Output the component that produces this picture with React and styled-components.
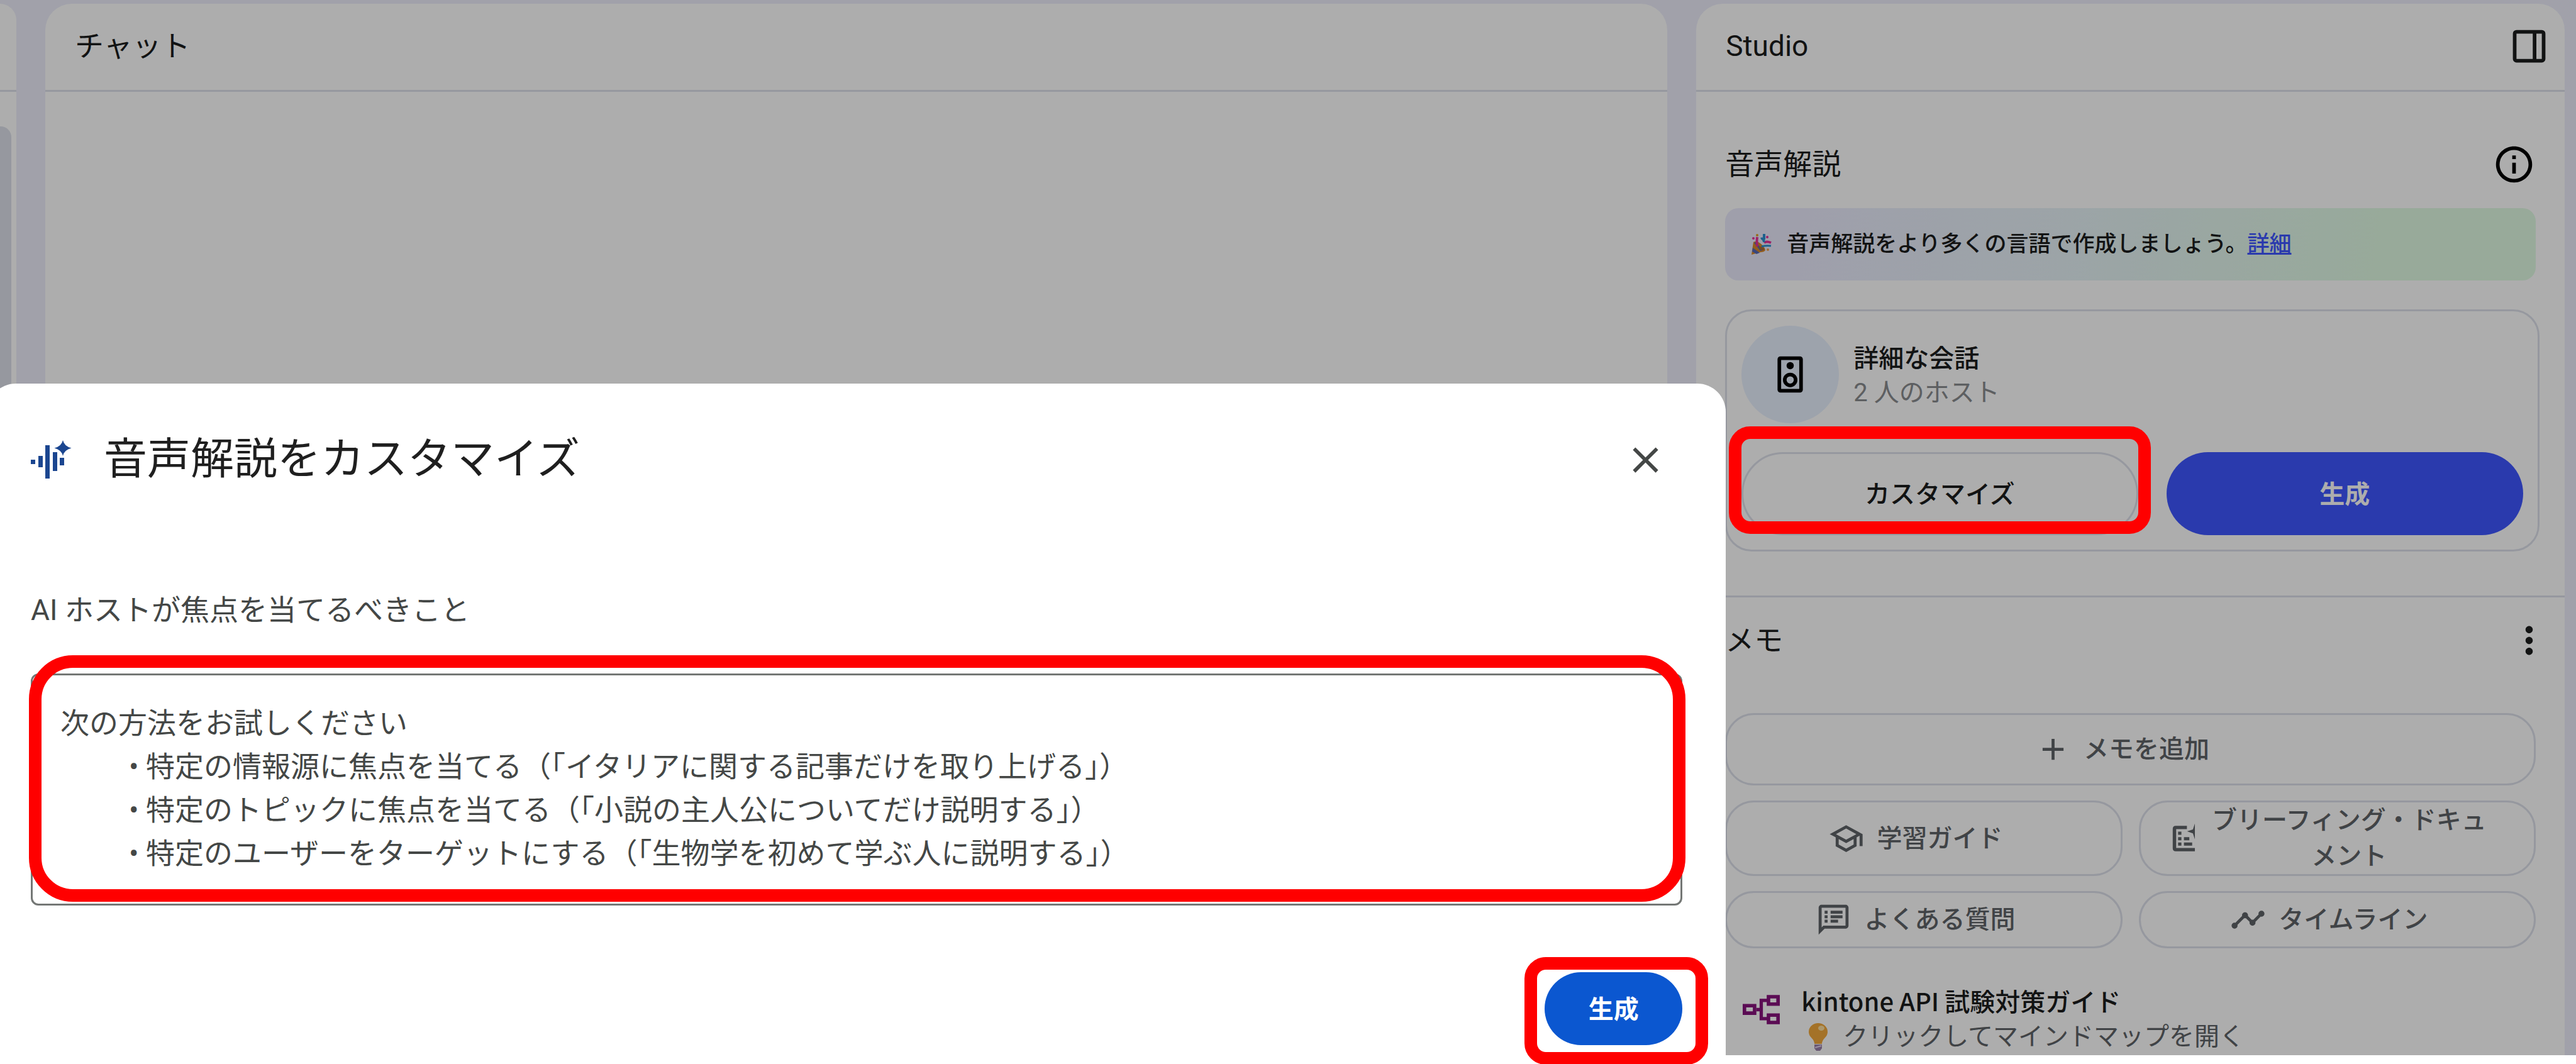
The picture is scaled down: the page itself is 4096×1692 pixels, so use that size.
import React from "react";
import styled, { createGlobalStyle } from "styled-components";
import {
  MdClose,
  MdInfoOutline,
  MdMoreVert,
  MdOutlineSchool,
  MdOutlineSpeakerNotes,
  MdTimeline,
  MdAdd,
} from "react-icons/md";

const color = {
  page: "#edeefb",
  line: "#dde1eb",
  text: "#1b1c1d",
  muted: "#8a8c90",
  soft: "#5f6368",
  brand: "#3f56ff",
  primary: "#0b57d0",
  mark: "#ff0000",
};

const GlobalStyle = createGlobalStyle`
  *, *::before, *::after { box-sizing: border-box; }
  body {
    margin: 0;
    background: #fff;
    color: ${color.text};
    font-family: Roboto, "Noto Sans CJK JP", sans-serif;
    font-size: 40px;
    line-height: 57px;
  }
  button, textarea { font: inherit; color: inherit; margin: 0; }
  button { cursor: pointer; }
  h1, h2, h3, p { margin: 0; font-weight: 400; }
  svg { display: block; flex: none; }
`;

const Frame = styled.div`
  position: relative;
  height: 100vh;
  overflow: hidden;
  background: #fff;
`;

const Page = styled.div`
  position: relative;
  height: calc(100% - 14px);
  padding: 6px 18px 0 0;
  background: ${color.page};
`;

const Columns = styled.div`
  display: grid;
  grid-template-columns: 26px minmax(0, 1868fr) minmax(0, 1000fr);
  gap: 46px;
  height: 100%;
`;

const Panel = styled.section`
  display: flex;
  flex-direction: column;
  min-height: 0;
  overflow: hidden;
  background: #fff;
  border-radius: ${(p) => (p.$edge ? "0 42px 0 0" : "42px 42px 0 0")};
`;

const PanelHeader = styled.header`
  display: flex;
  flex: none;
  align-items: center;
  justify-content: space-between;
  height: 140px;
  padding: 0 22px 2px 47px;
  border-bottom: 3px solid ${color.line};
`;

const Heading = styled.h2`
  font-size: 46px;
  line-height: 69px;
`;

const SourceBlock = styled.div`
  flex: 1;
  margin: 55px 8px 0 0;
  background: ${color.line};
  border-radius: 0 17px 0 0;
`;

const IconButton = styled.button`
  display: flex;
  padding: 0;
  border: 0;
  background: none;
  color: ${(p) => p.$color || color.text};
`;

const AudioSection = styled.div`
  display: flex;
  flex-direction: column;
  padding: 81px 46px 70px;
  border-bottom: 3px solid ${color.line};
`;

const TitleRow = styled.div`
  display: flex;
  align-items: center;
  justify-content: space-between;
`;

const Banner = styled.p`
  display: flex;
  align-items: center;
  gap: 23px;
  min-height: 115px;
  margin: 35px 0 46px;
  padding: 0 41px;
  border-radius: 21px;
  background: linear-gradient(100deg, #eaebfd 10%, #e6f2f7 42%, #e0fbe4 80%);
  font-size: 35px;
  font-weight: 500;
`;

const BannerLink = styled.a`
  color: ${color.brand};
`;

const Card = styled.div`
  box-sizing: content-box;
  align-self: flex-start;
  display: flex;
  flex-direction: column;
  gap: 46px;
  width: calc(100% - 46px);
  padding: 23px;
  border: 3px solid ${color.line};
  border-radius: 42px;
`;

const Host = styled.div`
  display: flex;
  align-items: center;
  gap: 23px;
`;

const HostIcon = styled.span`
  display: flex;
  align-items: center;
  justify-content: center;
  width: 155px;
  height: 155px;
  border-radius: 50%;
  background: #e8f0fe;
`;

const Strong = styled.h3`
  font-family: "Noto Sans CJK JP", sans-serif;
  font-size: 40px;
  font-weight: 500;
`;

const HostCount = styled.p`
  color: ${color.muted};
`;

const CardActions = styled.div`
  display: flex;
  gap: 45px;
`;

const Marked = styled.div`
  position: relative;
  display: flex;
  flex: ${(p) => p.$flex || "none"};
`;

const Mark = styled.span`
  position: absolute;
  z-index: 3;
  inset: ${(p) => p.$inset};
  border: 20px solid ${color.mark};
  border-radius: ${(p) => p.$radius}px;
  pointer-events: none;
`;

const Pill = styled.button`
  flex: ${(p) => p.$flex};
  height: 132px;
  padding: 3px 0 0;
  border: ${(p) => (p.$filled ? "0" : `3px solid ${color.line}`)};
  border-radius: 66px;
  background: ${(p) => (p.$filled ? color.brand : "#fff")};
  color: ${(p) => (p.$filled ? "#fff" : color.text)};
  font-weight: ${(p) => (p.$filled ? 700 : 500)};
`;

const NotesSection = styled.div`
  display: flex;
  flex-direction: column;
  padding: 34px 46px 0;
`;

const NotesTitle = styled(TitleRow)`
  margin: 0 -24px 81px 0;
`;

const NoteGrid = styled.div`
  display: grid;
  grid-template-columns: 1fr 1fr;
  gap: 24px 26px;
`;

const NoteButton = styled.button`
  display: flex;
  grid-column: ${(p) => (p.$wide ? "1 / -1" : "auto")};
  align-items: center;
  justify-content: center;
  gap: 20px;
  min-height: ${(p) => (p.$wide ? 115 : 91)}px;
  padding: 0 68px 0 42px;
  border: 3px solid ${color.line};
  border-radius: 46px;
  background: #fff;
  color: ${color.soft};
  font-weight: 500;
`;

const ClippedIcon = styled.span`
  flex: none;
  width: 44px;
  overflow: hidden;
`;

const NoteItem = styled.article`
  display: flex;
  gap: 29px;
  margin-top: 55px;
  padding-left: 23px;
  white-space: nowrap;
`;

const NoteIcon = styled.span`
  display: flex;
  align-items: center;
  justify-content: center;
  width: 69px;
  height: 69px;
  margin-top: 8px;
`;

const NoteHint = styled.p`
  display: flex;
  align-items: center;
  gap: 24px;
  padding-left: 12px;
  color: ${color.soft};
`;

const Scrim = styled.div`
  position: absolute;
  inset: 0;
  z-index: 1;
  background: rgba(0, 0, 0, 0.32);
`;

const Dialog = styled.form`
  position: absolute;
  z-index: 2;
  top: 610px;
  left: -20px;
  display: flex;
  flex-direction: column;
  width: calc(67vw + 20px);
  padding: 73px 69px 31px;
  border-radius: 45px 45px 0 0;
  background: #fff;
`;

const DialogHeader = styled.header`
  display: flex;
  align-items: center;
  gap: 50px;
  padding-right: 24px;
`;

const DialogTitle = styled.h1`
  flex: 1;
  color: #1f1f1f;
  font-size: 69px;
  line-height: 96px;
`;

const FocusLabel = styled.label`
  margin: 157px 0 66px;
  color: #444746;
  font-size: 46px;
  line-height: 69px;
`;

const FocusInput = styled.textarea`
  display: block;
  flex: 1;
  min-width: 0;
  padding: 42px 44px 45px;
  border: 3px solid #747775;
  border-radius: 12px;
  background: #fff;
  font-size: 46px;
  line-height: 69px;
  tab-size: 109px;
  resize: none;
  overflow: hidden;
  &::placeholder {
    color: #444746;
    opacity: 1;
  }
`;

const DialogFooter = styled.footer`
  display: flex;
  justify-content: flex-end;
  margin-top: 106px;
`;

const Submit = styled.button`
  width: 219px;
  height: 116px;
  padding: 3px 0 0;
  border: 0;
  border-radius: 58px;
  background: ${color.primary};
  color: #fff;
  font-weight: 700;
`;

const PanelIcon = () => (
  <svg width="69" height="69" viewBox="0 0 24 24" fill="currentColor" aria-hidden="true">
    <path d="M5 21q-.8 0-1.4-.6T3 19V5q0-.8.6-1.4T5 3h14q.8 0 1.4.6T21 5v14q0 .8-.6 1.4T19 21zm11-2h3V5h-3zm-2 0V5H5v14z" />
  </svg>
);

const SpeakerIcon = () => (
  <svg width="69" height="69" viewBox="0 0 24 24" fill="none" stroke="#000" strokeWidth="2" aria-hidden="true">
    <rect x="6" y="3" width="12" height="18" rx="0.6" />
    <circle cx="12" cy="7.1" r="2" fill="#000" stroke="none" />
    <circle cx="12" cy="15" r="3" />
  </svg>
);

const PartyIcon = () => (
  <svg width="34" height="34" viewBox="0 0 34 34" aria-hidden="true">
    <path d="M1 33 4 13q4-3 11 2t8 11q-2 3-7 3z" fill="#d98a2b" />
    <path d="m3 22 11 8-5 2-7-4zm2-8 10 13 4-1L8 13z" fill="#5468b8" />
    <path d="M12 20q5-1 10 4-3 4-7 1z" fill="#a86a3a" />
    <path d="M10 20q-1-8 0-15" fill="none" stroke="#e8309a" strokeWidth="4" />
    <path d="M21 14q4-3 11 0" fill="none" stroke="#e8309a" strokeWidth="4" />
    <path d="M16 8q4-2 5 5m0-13v9" fill="none" stroke="#2b8fd0" strokeWidth="4" />
    <path d="M17 20q7-2 15-1" fill="none" stroke="#2b8fd0" strokeWidth="3" />
    <circle cx="4" cy="7" r="2" fill="#e8309a" />
    <circle cx="26" cy="5" r="2" fill="#e8309a" />
    <circle cx="10" cy="2" r="2" fill="#e0a029" />
    <circle cx="27" cy="25" r="2" fill="#f0a04b" />
  </svg>
);

const BriefIcon = () => (
  <svg width="57" height="57" viewBox="0 0 24 24" fill="currentColor" aria-hidden="true">
    <path d="M5.700 3.500h7.500v2.200H6v12.600h13v2.200H5.700q-2 0-2-2v-13q0-2 2-2z" />
    <path d="M7.300 7.400h2.200v2.100H7.300zm0 3.700h2.200v2.100H7.300zm0 3.500h2.200v2.100H7.300zm3.900-3.500h3.600v2.100h-3.600zm0 3.500h5.500v2.100h-5.500z" />
    <path d="m18.500 2 1.300 3.900 3.900 1.300-3.900 1.300-1.300 3.900-1.300-3.900-3.900-1.300 3.900-1.300z" />
  </svg>
);

const MindMapIcon = () => (
  <svg width="59" height="47" viewBox="0 0 190 150" fill="none" stroke="#86127c" aria-hidden="true">
    <path d="M9 55h52v38H9zM132 9h49v38h-49zM132 103h49v38h-49z" strokeWidth="18" />
    <path d="M70 75h25m37-47H95v93h37" strokeWidth="17" />
  </svg>
);

const BulbIcon = () => (
  <svg width="30" height="44" viewBox="0 0 30 44" aria-hidden="true">
    <path d="M9 33q0-5-5-10-4-4-4-9a15 14 0 0 1 30 0q0 5-4 9-5 5-5 10z" fill="#f2a93b" />
    <ellipse cx="20" cy="8" rx="5" ry="4" fill="#ffe0a0" />
    <path d="M9 34h12v6l-3 4h-6l-3-4z" fill="#9a7fa8" />
    <path d="m10 39 10-3" stroke="#e3d3ee" strokeWidth="2" />
  </svg>
);

const AudioIcon = () => (
  <svg width="66" height="62" viewBox="51 700 66 62" fill="#1b4690" aria-hidden="true">
    <rect x="51" y="731" width="7" height="7" />
    <rect x="63" y="725" width="7" height="18" />
    <rect x="74" y="708" width="7" height="53" />
    <rect x="86" y="719" width="7" height="30" />
    <rect x="97" y="728" width="7" height="12" />
    <path d="M102 700q2 9.500 13.500 12.500-11.500 3-13.500 12.500-2-9.500-13.500-12.500 11.500-3 13.500-12.500z" />
  </svg>
);

const HINT = [
  "次の方法をお試しください",
  "\t• 特定の情報源に焦点を当てる（「イタリアに関する記事だけを取り上げる」）",
  "\t• 特定のトピックに焦点を当てる（「小説の主人公についてだけ説明する」）",
  "\t• 特定のユーザーをターゲットにする（「生物学を初めて学ぶ人に説明する」）",
].join("\n");

function StudioPanel() {
  return (
    <Panel>
      <PanelHeader>
        <Heading>Studio</Heading>
        <IconButton type="button" aria-label="パネルを閉じる">
          <PanelIcon />
        </IconButton>
      </PanelHeader>
      <AudioSection>
        <TitleRow>
          <Heading>音声解説</Heading>
          <IconButton type="button" aria-label="情報" $color="#000">
            <MdInfoOutline size={69} />
          </IconButton>
        </TitleRow>
        <Banner>
          <PartyIcon />
          <span>
            音声解説をより多くの言語で作成しましょう。<BannerLink href="#details">詳細</BannerLink>
          </span>
        </Banner>
        <Card>
          <Host>
            <HostIcon>
              <SpeakerIcon />
            </HostIcon>
            <div>
              <Strong>詳細な会話</Strong>
              <HostCount>2 人のホスト</HostCount>
            </div>
          </Host>
          <CardActions>
            <Marked $flex="10 1 0">
              <Pill type="button" $flex="1">
                カスタマイズ
              </Pill>
              <Mark $inset="-41px -20px 2px -20px" $radius={34} />
            </Marked>
            <Pill type="button" $flex="9 1 0" $filled>
              生成
            </Pill>
          </CardActions>
        </Card>
      </AudioSection>
      <NotesSection>
        <NotesTitle>
          <Heading>メモ</Heading>
          <IconButton type="button" aria-label="その他">
            <MdMoreVert size={69} />
          </IconButton>
        </NotesTitle>
        <NoteGrid>
          <NoteButton type="button" $wide>
            <MdAdd size={57} />
            メモを追加
          </NoteButton>
          <NoteButton type="button">
            <MdOutlineSchool size={57} />
            学習ガイド
          </NoteButton>
          <NoteButton type="button">
            <ClippedIcon>
              <BriefIcon />
            </ClippedIcon>
            <span>ブリーフィング・ドキュメント</span>
          </NoteButton>
          <NoteButton type="button">
            <MdOutlineSpeakerNotes size={57} />
            よくある質問
          </NoteButton>
          <NoteButton type="button">
            <MdTimeline size={57} />
            タイムライン
          </NoteButton>
        </NoteGrid>
        <NoteItem>
          <NoteIcon>
            <MindMapIcon />
          </NoteIcon>
          <div>
            <Strong>kintone API 試験対策ガイド</Strong>
            <NoteHint>
              <BulbIcon />
              クリックしてマインドマップを開く
            </NoteHint>
          </div>
        </NoteItem>
      </NotesSection>
    </Panel>
  );
}

function CustomizeDialog() {
  return (
    <Dialog role="dialog" aria-labelledby="dialog-title" onSubmit={(e) => e.preventDefault()}>
      <DialogHeader>
        <AudioIcon />
        <DialogTitle id="dialog-title">音声解説をカスタマイズ</DialogTitle>
        <IconButton type="button" aria-label="閉じる" $color="#444746">
          <MdClose size={69} />
        </IconButton>
      </DialogHeader>
      <FocusLabel htmlFor="focus">AI ホストが焦点を当てるべきこと</FocusLabel>
      <Marked>
        <FocusInput id="focus" rows={4} placeholder={HINT} />
        <Mark $inset="-29px -5px 6px -3px" $radius={70} />
      </Marked>
      <DialogFooter>
        <Marked>
          <Submit type="submit">生成</Submit>
          <Mark $inset="-24px -41px -31px -32px" $radius={34} />
        </Marked>
      </DialogFooter>
    </Dialog>
  );
}

export default function App() {
  return (
    <>
      <GlobalStyle />
      <Frame>
        <Page>
          <Columns>
            <Panel $edge>
              <PanelHeader />
              <SourceBlock />
            </Panel>
            <Panel>
              <PanelHeader>
                <Heading>チャット</Heading>
              </PanelHeader>
            </Panel>
            <StudioPanel />
          </Columns>
          <Scrim />
        </Page>
        <CustomizeDialog />
      </Frame>
    </>
  );
}
